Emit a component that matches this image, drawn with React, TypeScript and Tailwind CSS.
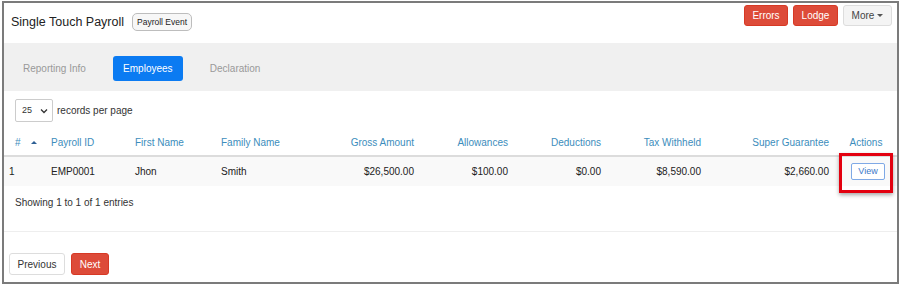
import React from 'react'

const font = { fontFamily: '"Liberation Sans", Arial, sans-serif' }

const columns = [
  { label: 'Payroll ID', width: 'w-[84px]', align: 'text-left' },
  { label: 'First Name', width: 'w-[86px]', align: 'text-left' },
  { label: 'Family Name', width: 'w-[86px]', align: 'text-left' },
  { label: 'Gross Amount', width: 'w-[119px]', align: 'text-right' },
  { label: 'Allowances', width: 'w-[94px]', align: 'text-right' },
  { label: 'Deductions', width: 'w-[93px]', align: 'text-right' },
  { label: 'Tax Withheld', width: 'w-[100px]', align: 'text-right' },
  { label: 'Super Guarantee', width: 'w-[128px]', align: 'text-right' },
]

const rows = [
  {
    no: '1',
    cells: ['EMP0001', 'Jhon', 'Smith', '$26,500.00', '$100.00', '$0.00', '$8,590.00', '$2,660.00'],
  },
]

export default function App() {
  return (
    <div className="w-[904px] h-[286px] bg-white pl-[2px] pt-[1px]" style={font}>
      <div className="relative w-[897px] h-[283px] border-2 border-[#7b7b7b] bg-white">
        {/* header */}
        <div className="flex justify-between h-[40px]">
          <div className="flex items-center gap-[8px] pl-[7px] pt-[5px] h-[32px]">
            <h1 className="text-[12.5px] leading-[20px] text-[#222]">Single Touch Payroll</h1>
            <span className="border border-[#bdbdbd] rounded-[5px] bg-[#f7f7f7] px-[4px] h-[18px] leading-[16px] text-[8.5px] text-[#222]">
              Payroll Event
            </span>
          </div>
          <div className="flex gap-[5px] pt-[2px] pr-[5px]">
            <button className="h-[21px] w-[44px] rounded-[3px] bg-[#dd4b39] border border-[#d73925] text-white text-[10px]">
              Errors
            </button>
            <button className="h-[21px] w-[45px] rounded-[3px] bg-[#dd4b39] border border-[#d73925] text-white text-[10px]">
              Lodge
            </button>
            <button className="h-[21px] w-[49px] rounded-[3px] bg-[#f4f4f4] border border-[#dddddd] text-[#444] text-[10px] flex items-center justify-center gap-[3px]">
              More
              <span className="w-0 h-0 border-l-[3px] border-r-[3px] border-t-[3px] border-l-transparent border-r-transparent border-t-[#555]" />
            </button>
          </div>
        </div>

        {/* tabs */}
        <div className="h-[48px] bg-[#f0f0f0] flex items-start gap-4 pl-[8px] pt-[13px]">
          <span className="h-[25px] px-[11px] flex items-center text-[10px] text-[#999]">Reporting Info</span>
          <span className="h-[25px] w-[70px] rounded-[3px] bg-[#0b7bf2] flex items-center justify-center text-[10px] text-white">
            Employees
          </span>
          <span className="h-[25px] px-[11px] flex items-center text-[10px] text-[#999]">Declaration</span>
        </div>

        {/* records per page */}
        <div className="flex items-center gap-[4px] pl-[11px] mt-[8px]">
          <div className="w-[38px] h-[23px] border border-[#cccccc] rounded-[2px] flex items-center justify-between pl-[6px] pr-[4px]">
            <span className="text-[9px] text-[#333]">25</span>
            <svg width="8" height="6" viewBox="0 0 8 6">
              <path d="M1 1.5 L4 4.5 L7 1.5" fill="none" stroke="#333" strokeWidth="1.3" />
            </svg>
          </div>
          <span className="text-[10px] text-[#333]">records per page</span>
        </div>

        {/* table */}
        <table className="mt-[8px] w-full table-fixed border-collapse text-[10px]">
          <thead>
            <tr className="border-b-2 border-[#dcdcdc]">
              <th className="relative w-[41px] h-[26px] pl-[11px] text-left font-normal text-[#3c8dbc]">
                #
                <span className="absolute left-[27px] top-[11px] w-0 h-0 border-l-[3px] border-r-[3px] border-b-[3px] border-l-transparent border-r-transparent border-b-[#2d5f94]" />
              </th>
              {columns.map((c) => (
                <th key={c.label} className={`${c.width} ${c.align} h-[26px] px-[6px] font-normal text-[#3c8dbc]`}>
                  {c.label}
                </th>
              ))}
              <th className="h-[26px] text-center font-normal text-[#3c8dbc]">Actions</th>
            </tr>
          </thead>
          <tbody>
            {rows.map((r) => (
              <tr key={r.no} className="bg-[#f9f9f9]">
                <td className="h-[30px] pl-[5px] text-[#222]">{r.no}</td>
                {r.cells.map((v, i) => (
                  <td key={i} className={`${columns[i].align} h-[30px] px-[6px] text-[#222]`}>
                    {v}
                  </td>
                ))}
                <td className="h-[30px] text-center">
                  <button className="ml-[4px] w-[34px] h-[17px] border border-[#7fa9e6] rounded-[2px] bg-white text-[9px] text-[#3a78c9]">
                    View
                  </button>
                </td>
              </tr>
            ))}
          </tbody>
        </table>

        <p className="mt-[10px] pl-[11px] text-[10px] leading-[14px] text-[#333]">Showing 1 to 1 of 1 entries</p>

        <div className="mt-[21px] border-t border-[#eeeeee] pt-[21px] pl-[5px] flex gap-[6px]">
          <button className="h-[22px] w-[56px] rounded-[3px] bg-white border border-[#dddddd] text-[10px] text-[#333]">
            Previous
          </button>
          <button className="h-[22px] w-[38px] rounded-[3px] bg-[#dd4b39] border border-[#d73925] text-[10px] text-white">
            Next
          </button>
        </div>

        {/* highlight around the action */}
        <div className="absolute left-[835px] top-[150px] w-[54px] h-[40px] border-[3px] border-[#e3000f] shadow-[0_2px_4px_rgba(0,0,0,0.35)]" />
      </div>
    </div>
  )
}
